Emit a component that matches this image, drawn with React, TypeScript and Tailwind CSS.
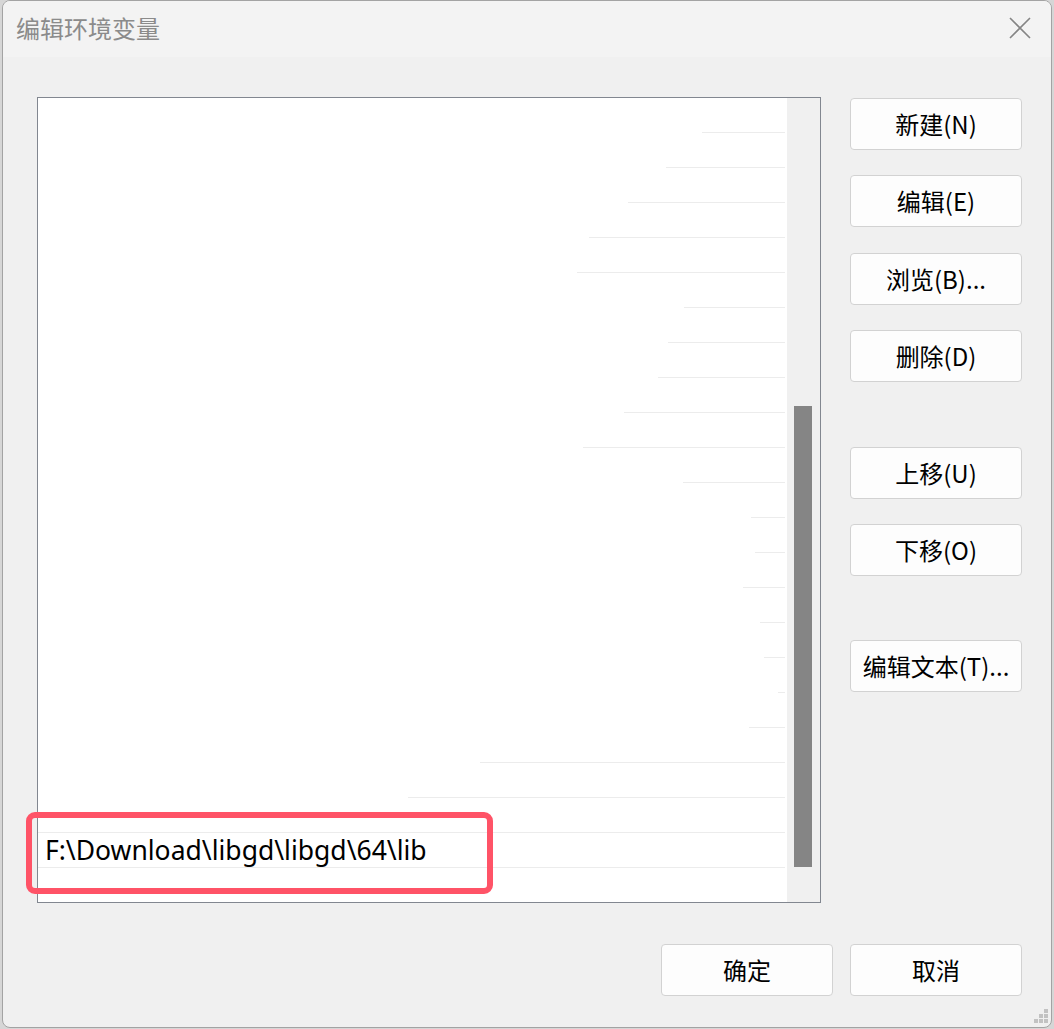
import React from "react";

const lines: Array<[number, number]> = [
  [702, 784], [666, 784], [628, 784], [589, 784], [577, 784], [684, 784],
  [668, 784], [658, 784], [624, 784], [583, 784], [683, 784], [751, 784],
  [755, 784], [743, 784], [760, 784], [764, 784], [778, 784], [749, 784],
  [480, 784], [408, 784], [38, 784], [38, 784],
];

const cjk = { fontFamily: '"Noto Sans CJK SC", "Noto Sans", sans-serif' };

function Btn({ label, className }: { label: string; className?: string }) {
  return (
    <div
      className={
        "w-[172px] h-[52px] shrink-0 rounded-[4px] border border-[#d2d2d2] bg-[#fdfdfd] flex items-center justify-center text-[24px] leading-none text-black " +
        (className ?? "")
      }
      style={cjk}
    >
      {label}
    </div>
  );
}

export default function App() {
  return (
    <div className="w-[1054px] h-[1029px] bg-[#d6d6d6] pl-[2px] pr-[2px] pb-px overflow-hidden">
      <div className="relative w-full h-full rounded-[8px] border border-[#a3a3a3] bg-[#f0f0f0] overflow-hidden flex flex-col">
        {/* Title bar */}
        <div className="h-[56px] shrink-0 bg-[#f3f3f3] flex items-center justify-between pl-[13px] pr-[20px]">
          <span className="text-[24px] leading-none text-[#8b8b8b] -mt-[2px]" style={cjk}>
            编辑环境变量
          </span>
          <svg width="22" height="22" viewBox="0 0 22 22" className="-mt-[2px]">
            <path d="M1 1 L21 21 M21 1 L1 21" stroke="#858585" strokeWidth="1.6" fill="none" />
          </svg>
        </div>
        {/* Body */}
        <div className="flex-1 flex flex-col pl-[34px] pt-[40px]">
          <div className="flex gap-[29px]">
            {/* List */}
            <div className="relative w-[784px] h-[806px] border border-[#828790] bg-white flex">
              <div className="flex-1 flex flex-col">
                {lines.map(([s, e], i) => (
                  <div key={i} className="h-[35px] shrink-0 relative flex items-center">
                    <div
                      className="absolute bottom-0 h-px bg-[#ececec]"
                      style={{ left: s - 38, width: e - s + 1 }}
                    />
                    {i === 21 && (
                      <span
                        className="relative pl-[7px] text-[26.5px] leading-none text-black"
                        style={{ fontFamily: '"Noto Sans", "Open Sans", sans-serif' }}
                      >
                        F:\Download\libgd\libgd\64\lib
                      </span>
                    )}
                  </div>
                ))}
              </div>
              {/* Scrollbar */}
              <div className="w-[33px] h-full bg-[#f0f0f0] flex flex-col pt-[308px] pb-[35px] pl-[7px]">
                <div className="w-[18px] flex-1 bg-[#858585]" />
              </div>
              {/* Highlight */}
              <div className="absolute left-[-12px] top-[714px] w-[467px] h-[82px] border-[6px] border-[#ff5367] rounded-[9px]" />
            </div>
            {/* Right buttons */}
            <div className="flex flex-col pt-px">
              <Btn label="新建(N)" />
              <Btn label="编辑(E)" className="mt-[25px]" />
              <Btn label="浏览(B)..." className="mt-[26px]" />
              <Btn label="删除(D)" className="mt-[25px]" />
              <Btn label="上移(U)" className="mt-[65px]" />
              <Btn label="下移(O)" className="mt-[25px]" />
              <Btn label="编辑文本(T)..." className="mt-[64px]" />
            </div>
          </div>
          <div className="flex justify-end gap-[17px] pr-[29px] mt-[41px]">
            <Btn label="确定" />
            <Btn label="取消" />
          </div>
        </div>
        {/* Resize grip */}
        <svg width="16" height="16" viewBox="0 0 16 16" className="absolute right-[2px] bottom-[3px]">
          <rect x="11" y="1" width="4" height="4" fill="#c2c2c2" />
          <rect x="6" y="6" width="4" height="4" fill="#c2c2c2" />
          <rect x="11" y="6" width="4" height="4" fill="#c2c2c2" />
          <rect x="1" y="11" width="4" height="4" fill="#c2c2c2" />
          <rect x="6" y="11" width="4" height="4" fill="#c2c2c2" />
          <rect x="11" y="11" width="4" height="4" fill="#c2c2c2" />
        </svg>
      </div>
    </div>
  );
}
